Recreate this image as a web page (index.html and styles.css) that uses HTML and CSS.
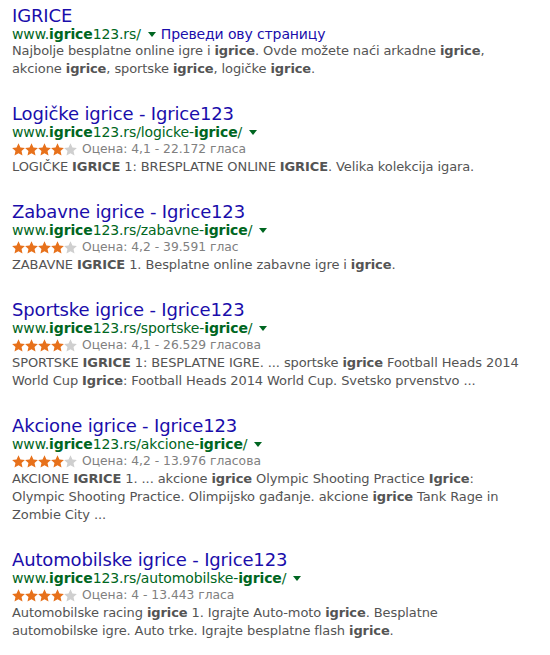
FILE: index.html
```html
<!DOCTYPE html>
<html lang="sr">
<head>
<meta charset="utf-8">
<title>IGRICE</title>
<link rel="stylesheet" href="styles.css">
</head>
<body>
<div class="results">

  <div class="result">
    <h3 class="title"><a href="#">IGRICE</a></h3>
    <div class="url">www.<b>igrice</b>123.rs/<span class="arrow"></span><a class="translate" href="#">Преведи ову страницу</a></div>
    <div class="snippet">Najbolje besplatne online igre i <b>igrice</b>. Ovde možete naći arkadne <b>igrice</b>,<br>akcione <b>igrice</b>, sportske <b>igrice</b>, logičke <b>igrice</b>.</div>
  </div>

  <div class="result">
    <h3 class="title"><a href="#">Logičke igrice - Igrice123</a></h3>
    <div class="url">www.<b>igrice</b>123.rs/logicke-<b>igrice</b>/<span class="arrow"></span></div>
    <div class="rating"><span class="stars"><svg class="star on" viewBox="0 0 12 12"><path d="M6 0.2l1.8 3.9 4.1 0.4-3.1 2.8 0.9 4.2L6 9.4 2.3 11.5l0.9-4.2L0.1 4.5l4.1-0.4z"/></svg><svg class="star on" viewBox="0 0 12 12"><path d="M6 0.2l1.8 3.9 4.1 0.4-3.1 2.8 0.9 4.2L6 9.4 2.3 11.5l0.9-4.2L0.1 4.5l4.1-0.4z"/></svg><svg class="star on" viewBox="0 0 12 12"><path d="M6 0.2l1.8 3.9 4.1 0.4-3.1 2.8 0.9 4.2L6 9.4 2.3 11.5l0.9-4.2L0.1 4.5l4.1-0.4z"/></svg><svg class="star on" viewBox="0 0 12 12"><path d="M6 0.2l1.8 3.9 4.1 0.4-3.1 2.8 0.9 4.2L6 9.4 2.3 11.5l0.9-4.2L0.1 4.5l4.1-0.4z"/></svg><svg class="star off" viewBox="0 0 12 12"><path d="M6 0.2l1.8 3.9 4.1 0.4-3.1 2.8 0.9 4.2L6 9.4 2.3 11.5l0.9-4.2L0.1 4.5l4.1-0.4z"/></svg></span>Оцена: 4,1 - 22.172 гласа</div>
    <div class="snippet">LOGIČKE <b>IGRICE</b> 1: BRESPLATNE ONLINE <b>IGRICE</b>. Velika kolekcija igara.</div>
  </div>

  <div class="result">
    <h3 class="title"><a href="#">Zabavne igrice - Igrice123</a></h3>
    <div class="url">www.<b>igrice</b>123.rs/zabavne-<b>igrice</b>/<span class="arrow"></span></div>
    <div class="rating"><span class="stars"><svg class="star on" viewBox="0 0 12 12"><path d="M6 0.2l1.8 3.9 4.1 0.4-3.1 2.8 0.9 4.2L6 9.4 2.3 11.5l0.9-4.2L0.1 4.5l4.1-0.4z"/></svg><svg class="star on" viewBox="0 0 12 12"><path d="M6 0.2l1.8 3.9 4.1 0.4-3.1 2.8 0.9 4.2L6 9.4 2.3 11.5l0.9-4.2L0.1 4.5l4.1-0.4z"/></svg><svg class="star on" viewBox="0 0 12 12"><path d="M6 0.2l1.8 3.9 4.1 0.4-3.1 2.8 0.9 4.2L6 9.4 2.3 11.5l0.9-4.2L0.1 4.5l4.1-0.4z"/></svg><svg class="star on" viewBox="0 0 12 12"><path d="M6 0.2l1.8 3.9 4.1 0.4-3.1 2.8 0.9 4.2L6 9.4 2.3 11.5l0.9-4.2L0.1 4.5l4.1-0.4z"/></svg><svg class="star off" viewBox="0 0 12 12"><path d="M6 0.2l1.8 3.9 4.1 0.4-3.1 2.8 0.9 4.2L6 9.4 2.3 11.5l0.9-4.2L0.1 4.5l4.1-0.4z"/></svg></span>Оцена: 4,2 - 39.591 глас</div>
    <div class="snippet">ZABAVNE <b>IGRICE</b> 1. Besplatne online zabavne igre i <b>igrice</b>.</div>
  </div>

  <div class="result">
    <h3 class="title"><a href="#">Sportske igrice - Igrice123</a></h3>
    <div class="url">www.<b>igrice</b>123.rs/sportske-<b>igrice</b>/<span class="arrow"></span></div>
    <div class="rating"><span class="stars"><svg class="star on" viewBox="0 0 12 12"><path d="M6 0.2l1.8 3.9 4.1 0.4-3.1 2.8 0.9 4.2L6 9.4 2.3 11.5l0.9-4.2L0.1 4.5l4.1-0.4z"/></svg><svg class="star on" viewBox="0 0 12 12"><path d="M6 0.2l1.8 3.9 4.1 0.4-3.1 2.8 0.9 4.2L6 9.4 2.3 11.5l0.9-4.2L0.1 4.5l4.1-0.4z"/></svg><svg class="star on" viewBox="0 0 12 12"><path d="M6 0.2l1.8 3.9 4.1 0.4-3.1 2.8 0.9 4.2L6 9.4 2.3 11.5l0.9-4.2L0.1 4.5l4.1-0.4z"/></svg><svg class="star on" viewBox="0 0 12 12"><path d="M6 0.2l1.8 3.9 4.1 0.4-3.1 2.8 0.9 4.2L6 9.4 2.3 11.5l0.9-4.2L0.1 4.5l4.1-0.4z"/></svg><svg class="star off" viewBox="0 0 12 12"><path d="M6 0.2l1.8 3.9 4.1 0.4-3.1 2.8 0.9 4.2L6 9.4 2.3 11.5l0.9-4.2L0.1 4.5l4.1-0.4z"/></svg></span>Оцена: 4,1 - 26.529 гласова</div>
    <div class="snippet">SPORTSKE <b>IGRICE</b> 1: BESPLATNE IGRE. ... sportske <b>igrice</b> Football Heads 2014<br>World Cup <b>Igrice</b>: Football Heads 2014 World Cup. Svetsko prvenstvo ...</div>
  </div>

  <div class="result">
    <h3 class="title"><a href="#">Akcione igrice - Igrice123</a></h3>
    <div class="url">www.<b>igrice</b>123.rs/akcione-<b>igrice</b>/<span class="arrow"></span></div>
    <div class="rating"><span class="stars"><svg class="star on" viewBox="0 0 12 12"><path d="M6 0.2l1.8 3.9 4.1 0.4-3.1 2.8 0.9 4.2L6 9.4 2.3 11.5l0.9-4.2L0.1 4.5l4.1-0.4z"/></svg><svg class="star on" viewBox="0 0 12 12"><path d="M6 0.2l1.8 3.9 4.1 0.4-3.1 2.8 0.9 4.2L6 9.4 2.3 11.5l0.9-4.2L0.1 4.5l4.1-0.4z"/></svg><svg class="star on" viewBox="0 0 12 12"><path d="M6 0.2l1.8 3.9 4.1 0.4-3.1 2.8 0.9 4.2L6 9.4 2.3 11.5l0.9-4.2L0.1 4.5l4.1-0.4z"/></svg><svg class="star on" viewBox="0 0 12 12"><path d="M6 0.2l1.8 3.9 4.1 0.4-3.1 2.8 0.9 4.2L6 9.4 2.3 11.5l0.9-4.2L0.1 4.5l4.1-0.4z"/></svg><svg class="star off" viewBox="0 0 12 12"><path d="M6 0.2l1.8 3.9 4.1 0.4-3.1 2.8 0.9 4.2L6 9.4 2.3 11.5l0.9-4.2L0.1 4.5l4.1-0.4z"/></svg></span>Оцена: 4,2 - 13.976 гласова</div>
    <div class="snippet">AKCIONE <b>IGRICE</b> 1. ... akcione <b>igrice</b> Olympic Shooting Practice <b>Igrice</b>:<br>Olympic Shooting Practice. Olimpijsko gađanje. akcione <b>igrice</b> Tank Rage in<br>Zombie City ...</div>
  </div>

  <div class="result">
    <h3 class="title"><a href="#">Automobilske igrice - Igrice123</a></h3>
    <div class="url">www.<b>igrice</b>123.rs/automobilske-<b>igrice</b>/<span class="arrow"></span></div>
    <div class="rating"><span class="stars"><svg class="star on" viewBox="0 0 12 12"><path d="M6 0.2l1.8 3.9 4.1 0.4-3.1 2.8 0.9 4.2L6 9.4 2.3 11.5l0.9-4.2L0.1 4.5l4.1-0.4z"/></svg><svg class="star on" viewBox="0 0 12 12"><path d="M6 0.2l1.8 3.9 4.1 0.4-3.1 2.8 0.9 4.2L6 9.4 2.3 11.5l0.9-4.2L0.1 4.5l4.1-0.4z"/></svg><svg class="star on" viewBox="0 0 12 12"><path d="M6 0.2l1.8 3.9 4.1 0.4-3.1 2.8 0.9 4.2L6 9.4 2.3 11.5l0.9-4.2L0.1 4.5l4.1-0.4z"/></svg><svg class="star on" viewBox="0 0 12 12"><path d="M6 0.2l1.8 3.9 4.1 0.4-3.1 2.8 0.9 4.2L6 9.4 2.3 11.5l0.9-4.2L0.1 4.5l4.1-0.4z"/></svg><svg class="star off" viewBox="0 0 12 12"><path d="M6 0.2l1.8 3.9 4.1 0.4-3.1 2.8 0.9 4.2L6 9.4 2.3 11.5l0.9-4.2L0.1 4.5l4.1-0.4z"/></svg></span>Оцена: 4 - 13.443 гласа</div>
    <div class="snippet">Automobilske racing <b>igrice</b> 1. Igrajte Auto-moto <b>igrice</b>. Besplatne<br>automobilske igre. Auto trke. Igrajte besplatne flash <b>igrice</b>.</div>
  </div>

</div>
</body>
</html>
```
FILE: styles.css
```css
html, body {
  margin: 0;
  padding: 0;
  background: #fff;
}
body {
  font-family: "DejaVu Sans", Verdana, sans-serif;
  color: #545454;
}
.results {
  padding: 5px 12px 0 12px;
}
.result {
  margin-bottom: 25px;
}
.title {
  margin: 0;
  font-size: 18px;
  font-weight: normal;
  line-height: 21px;
  letter-spacing: -0.15px;
}
.title a {
  color: #1a0dab;
  text-decoration: none;
}
.url {
  font-size: 14px;
  line-height: 16px;
  color: #006621;
  white-space: nowrap;
  letter-spacing: -0.12px;
}
.url b {
  font-weight: bold;
}
.arrow {
  display: inline-block;
  width: 0;
  height: 0;
  border-left: 4px solid transparent;
  border-right: 4px solid transparent;
  border-top: 5px solid #006621;
  margin: 0 5px 2px 7px;
  vertical-align: middle;
}
.translate {
  color: #1a0dab;
  text-decoration: none;
}
.rating {
  font-size: 12.3px;
  line-height: 18px;
  color: #808080;
  display: flex;
  align-items: center;
}
.stars {
  display: inline-flex;
  margin-right: 5px;
}
.star {
  width: 13px;
  height: 13px;
}
.star.on { fill: #e7711b; }
.star.off { fill: #cfcfcf; }
.snippet {
  font-size: 13px;
  line-height: 18px;
  color: #545454;
  letter-spacing: -0.1px;
  white-space: nowrap;
}
.snippet b {
  font-weight: bold;
}
```
